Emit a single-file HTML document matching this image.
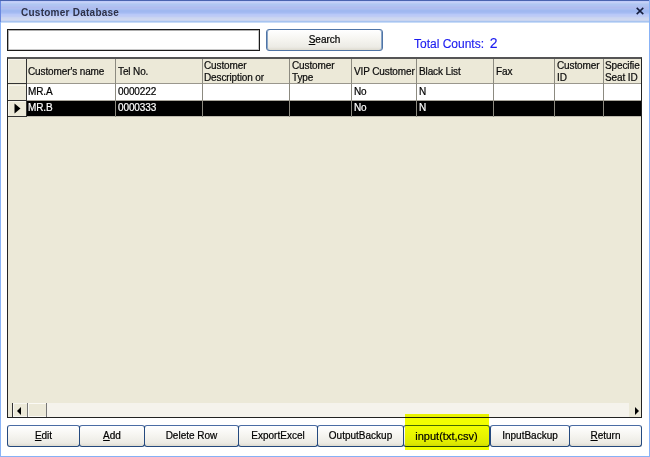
<!DOCTYPE html>
<html><head><meta charset="utf-8">
<style>
*{margin:0;padding:0;box-sizing:border-box}
html,body{width:650px;height:457px;overflow:hidden;background:#fff;font-family:"Liberation Sans",sans-serif}
.abs{position:absolute}
#win{position:absolute;left:0;top:0;width:650px;height:457px;background:#fff;overflow:hidden}
#title{position:absolute;left:0;top:0;width:650px;height:23px;background:linear-gradient(#4a64b0 0px,#4a64b0 1px,#c0ccf8 1px,#c0ccf8 2px,#c4d0f8 2px,#c4d0f8 3px,#b8cbf2 3px,#b8cbf2 4px,#b0c6f2 4px,#b0c6f2 5px,#b0c4f2 5px,#b0c4f2 6px,#b0c0f0 6px,#b0c0f0 7px,#b0bcee 7px,#b0bcee 8px,#aebef0 8px,#aebef0 9px,#a8bcf0 9px,#a8bcf0 10px,#a0b8f0 10px,#a0b8f0 11px,#a0b8f0 11px,#a0b8f0 12px,#a4baf2 12px,#a4baf2 13px,#acc0f4 13px,#acc0f4 14px,#b8c8f8 14px,#b8c8f8 15px,#bccaf6 15px,#bccaf6 16px,#c0ccf4 16px,#c0ccf4 17px,#c8d4f2 17px,#c8d4f2 18px,#cdd6f0 18px,#cdd6f0 19px,#d0d8f0 19px,#d0d8f0 20px,#c8d4f0 20px,#c8d4f0 21px,#a8c4f0 21px,#a8c4f0 22px,#c8dcf8 22px,#c8dcf8 23px)}
#title span{position:absolute;left:21px;top:7px;font-size:10px;font-weight:bold;color:#2e3147;letter-spacing:0.25px}
#lb{position:absolute;left:0;top:0;width:1px;height:457px;background:linear-gradient(#4a64b0 0,#4a64b0 1px,#6a88e0 1px,#6a88e0 22px,#88b2f6 22px)}
#rb{position:absolute;left:649px;top:0;width:1px;height:457px;background:#88b2f6}
#bb{position:absolute;left:0;top:456px;width:650px;height:1px;background:#88b2f6}
#close{position:absolute;left:636px;top:7px;width:8px;height:8px}
#search{position:absolute;left:7px;top:29px;width:253px;height:22px;border:1px solid #1a1a1a;box-shadow:inset 1px 1px 0 #b0b0b0,inset -1px -1px 0 #c8c8c8;background:#fff}
.btn{position:absolute;border:1px solid #24497e;border-top-color:#4a6ca4;border-radius:3px;background:linear-gradient(#ffffff,#f6f5f1 45%,#ecebe5 85%,#dedbd0);font-size:10px;color:#000;text-align:center;line-height:21px;white-space:nowrap;-webkit-text-stroke:0.2px #000}
#total{position:absolute;left:414px;top:35px;font-size:12px;color:#1c1cf0;letter-spacing:0px;white-space:nowrap;-webkit-text-stroke:0.15px #1c1cf0}
#grid{position:absolute;left:7px;top:57px;width:635px;height:361px;background:#ece9d8;border:1px solid #222;border-top:2px solid #555;border-right:1px solid #222}
.c{position:absolute;font-size:10px;line-height:12px;overflow:hidden;white-space:nowrap;letter-spacing:-0.12px;color:#000;-webkit-text-stroke:0.2px currentColor}
.h{color:#0a0a0a}
#hl{position:absolute;left:405px;top:414px;width:84px;height:36px;background:#f2ff00;mix-blend-mode:multiply}
</style></head><body>
<div id="win">
<div id="title"><span>Customer Database</span></div>
<div id="lb"></div><div id="rb"></div><div id="bb"></div>
<svg id="close" viewBox="0 0 8 8"><path d="M0.7 0.9L7.3 7.1M7.3 0.9L0.7 7.1" stroke="#141c3c" stroke-width="1.5"/></svg>
<div id="search"></div>
<div class="btn" style="left:266px;top:29px;width:117px;height:22px;line-height:20px;border-color:#4f74a6;box-shadow:inset 1px 0 0 #8aa6c8,inset -1px 0 0 #8aa6c8"><u>S</u>earch</div>
<div id="total">Total Counts:&nbsp; <span style="font-size:14px;margin-left:-1px;position:relative;top:0px">2</span></div>
<div id="grid"></div>
<div class="abs" style="left:27px;top:84px;width:614px;height:16px;background:#fff"></div>
<div class="abs" style="left:27px;top:101px;width:614px;height:15px;background:#000"></div>
<div class="abs" style="left:8px;top:59px;width:18px;height:24px;border-top:1px solid #f7f5ec;border-left:1px solid #f7f5ec"></div>
<div class="abs" style="left:8px;top:85px;width:18px;height:15px;border-top:1px solid #f7f5ec;border-left:1px solid #f7f5ec"></div>
<div class="abs" style="left:8px;top:101px;width:18px;height:15px;border-top:1px solid #f7f5ec;border-left:1px solid #f7f5ec"></div>
<div class="abs" style="left:8px;top:83px;width:633px;height:1px;background:#9a978d"></div>
<div class="abs" style="left:8px;top:100px;width:633px;height:1px;background:#a8a59b"></div>
<div class="abs" style="left:8px;top:116px;width:633px;height:1px;background:#bdbaae"></div>
<div class="abs" style="left:8px;top:83px;width:19px;height:1px;background:#333"></div>
<div class="abs" style="left:8px;top:100px;width:19px;height:1px;background:#333"></div>
<div class="abs" style="left:8px;top:116px;width:19px;height:1px;background:#333"></div>
<div class="abs" style="left:26px;top:59px;width:1px;height:58px;background:#333"></div>
<div class="abs" style="left:115px;top:59px;width:1px;height:58px;background:#8c8a80"></div>
<div class="abs" style="left:202px;top:59px;width:1px;height:58px;background:#8c8a80"></div>
<div class="abs" style="left:289px;top:59px;width:1px;height:58px;background:#8c8a80"></div>
<div class="abs" style="left:351px;top:59px;width:1px;height:58px;background:#8c8a80"></div>
<div class="abs" style="left:416px;top:59px;width:1px;height:58px;background:#8c8a80"></div>
<div class="abs" style="left:493px;top:59px;width:1px;height:58px;background:#8c8a80"></div>
<div class="abs" style="left:554px;top:59px;width:1px;height:58px;background:#8c8a80"></div>
<div class="abs" style="left:603px;top:59px;width:1px;height:58px;background:#8c8a80"></div>
<div class="c h" style="left:28px;top:66px;width:87px">Customer's name</div>
<div class="c h" style="left:118px;top:66px;width:84px">Tel No.</div>
<div class="c h" style="left:204px;top:60px;width:85px">Customer</div>
<div class="c h" style="left:204px;top:72px;width:85px">Description or</div>
<div class="c h" style="left:292px;top:60px;width:59px">Customer</div>
<div class="c h" style="left:292px;top:72px;width:59px">Type</div>
<div class="c h" style="left:354px;top:66px;width:62px">VIP Customer</div>
<div class="c h" style="left:419px;top:66px;width:74px">Black List</div>
<div class="c h" style="left:496px;top:66px;width:58px">Fax</div>
<div class="c h" style="left:557px;top:60px;width:46px">Customer</div>
<div class="c h" style="left:557px;top:72px;width:46px">ID</div>
<div class="c h" style="left:605px;top:60px;width:36px">Specifie</div>
<div class="c h" style="left:605px;top:72px;width:36px">Seat ID</div>
<div class="c" style="left:28px;top:86px;width:87px">MR.A</div>
<div class="c" style="left:118px;top:86px;width:84px">0000222</div>
<div class="c" style="left:354px;top:86px;width:62px">No</div>
<div class="c" style="left:419px;top:86px;width:74px">N</div>
<div class="c" style="left:28px;top:102px;width:87px;color:#fff">MR.B</div>
<div class="c" style="left:118px;top:102px;width:84px;color:#fff">0000333</div>
<div class="c" style="left:354px;top:102px;width:62px;color:#fff">No</div>
<div class="c" style="left:419px;top:102px;width:74px;color:#fff">N</div>
<svg class="abs" style="left:14px;top:103px" width="8" height="11" viewBox="0 0 8 11"><path d="M0.5 0.5L6.5 5.5L0.5 10.5Z" fill="#000"/></svg>
<div class="abs" style="left:8px;top:403px;width:633px;height:14px;background:#f5f3ec"></div>
<div class="abs" style="left:8px;top:403px;width:4px;height:14px;background:#ece9d8"></div>
<div class="abs" style="left:12px;top:403px;width:1px;height:14px;background:#333"></div>
<div class="abs" style="left:13px;top:403px;width:14px;height:14px;background:#ece9d8;border:1px solid #f8f7f2;border-right:0"></div>
<div class="abs" style="left:27px;top:403px;width:1px;height:14px;background:#777"></div>
<div class="abs" style="left:28px;top:403px;width:18px;height:14px;background:#ece9d8;border:1px solid #fbfaf5;border-right:0"></div>
<div class="abs" style="left:46px;top:403px;width:1px;height:14px;background:#777"></div>
<div class="abs" style="left:629px;top:403px;width:12px;height:14px;background:#ece9d8"></div>
<svg class="abs" style="left:17px;top:407px" width="5" height="8" viewBox="0 0 5 8"><path d="M4 0L0 4L4 8Z" fill="#000"/></svg>
<svg class="abs" style="left:635px;top:407px" width="5" height="8" viewBox="0 0 5 8"><path d="M0 0L4 4L0 8Z" fill="#000"/></svg>
<div class="btn" style="left:7px;top:425px;width:73px;height:22px;line-height:20px"><u>E</u>dit</div>
<div class="btn" style="left:79px;top:425px;width:66px;height:22px;line-height:20px"><u>A</u>dd</div>
<div class="btn" style="left:144px;top:425px;width:95px;height:22px;line-height:20px">Delete Row</div>
<div class="btn" style="left:238px;top:425px;width:80px;height:22px;line-height:20px">ExportExcel</div>
<div class="btn" style="left:317px;top:425px;width:87px;height:22px;line-height:20px">OutputBackup</div>
<div class="btn" style="left:403px;top:425px;width:87px;height:22px;line-height:20px"><span style="font-size:11px">input(txt,csv)</span></div>
<div class="btn" style="left:490px;top:425px;width:80px;height:22px;line-height:20px">InputBackup</div>
<div class="btn" style="left:569px;top:425px;width:73px;height:22px;line-height:20px"><u>R</u>eturn</div>
<div id="hl"></div>
</div>
</body></html>
